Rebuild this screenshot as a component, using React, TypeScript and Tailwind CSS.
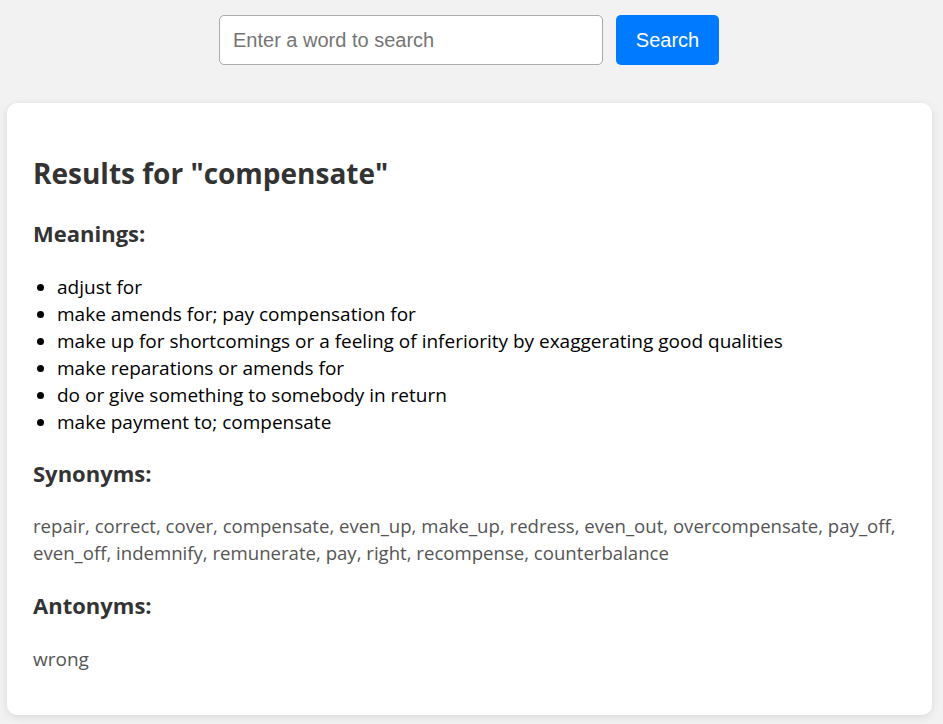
import React, { useState } from 'react';

const meanings = [
  'adjust for',
  'make amends for; pay compensation for',
  'make up for shortcomings or a feeling of inferiority by exaggerating good qualities',
  'make reparations or amends for',
  'do or give something to somebody in return',
  'make payment to; compensate',
];

const synonyms = [
  'repair', 'correct', 'cover', 'compensate', 'even_up', 'make_up', 'redress', 'even_out',
  'overcompensate', 'pay_off', 'even_off', 'indemnify', 'remunerate', 'pay', 'right',
  'recompense', 'counterbalance',
];

const antonyms = ['wrong'];

const App = () => {
  const [word, setWord] = useState('');

  return (
    <div className="min-h-[724px] bg-[#f2f2f2] pt-[15px] pb-[9px] font-['Open_Sans',sans-serif]">
      {/* Search bar */}
      <div className="flex justify-center gap-[13px] pr-[5px]">
        <input
          value={word}
          onChange={(e) => setWord(e.target.value)}
          placeholder="Enter a word to search"
          className="w-[384px] h-[50px] px-[13px] bg-white border border-[#ababab] rounded-[5px] text-[20px] font-['Liberation_Sans',Arial,sans-serif] placeholder:text-[#757575] outline-none"
        />
        <button className="w-[103px] h-[50px] bg-[#007bff] text-white rounded-[5px] text-[20px] font-['Liberation_Sans',Arial,sans-serif]">
          Search
        </button>
      </div>

      {/* Results card */}
      <div className="mt-[38px] ml-[7px] w-[925px] bg-white rounded-[10px] shadow-[0_2px_10px_rgba(0,0,0,0.1)] px-[26px] pt-[51px] pb-[42px]">
        <h2 className="text-[28px] leading-[38px] font-bold text-[#333]">Results for "compensate"</h2>

        <h3 className="mt-[28px] text-[22px] leading-[26px] font-bold text-[#333]">Meanings:</h3>
        <ul className="mt-[28px] list-disc pl-[24px] text-[19px] leading-[27px] text-black">
          {meanings.map((m) => (
            <li key={m}>{m}</li>
          ))}
        </ul>

        <h3 className="mt-[24px] text-[22px] leading-[26px] font-bold text-[#333]">Synonyms:</h3>
        <p className="mt-[26px] text-[18.6px] leading-[27px] text-[#555]">{synonyms.join(', ')}</p>

        <h3 className="mt-[26px] text-[22px] leading-[26px] font-bold text-[#333]">Antonyms:</h3>
        <p className="mt-[28px] text-[19px] leading-[27px] text-[#555]">{antonyms.join(', ')}</p>
      </div>
    </div>
  );
};

export default App;
